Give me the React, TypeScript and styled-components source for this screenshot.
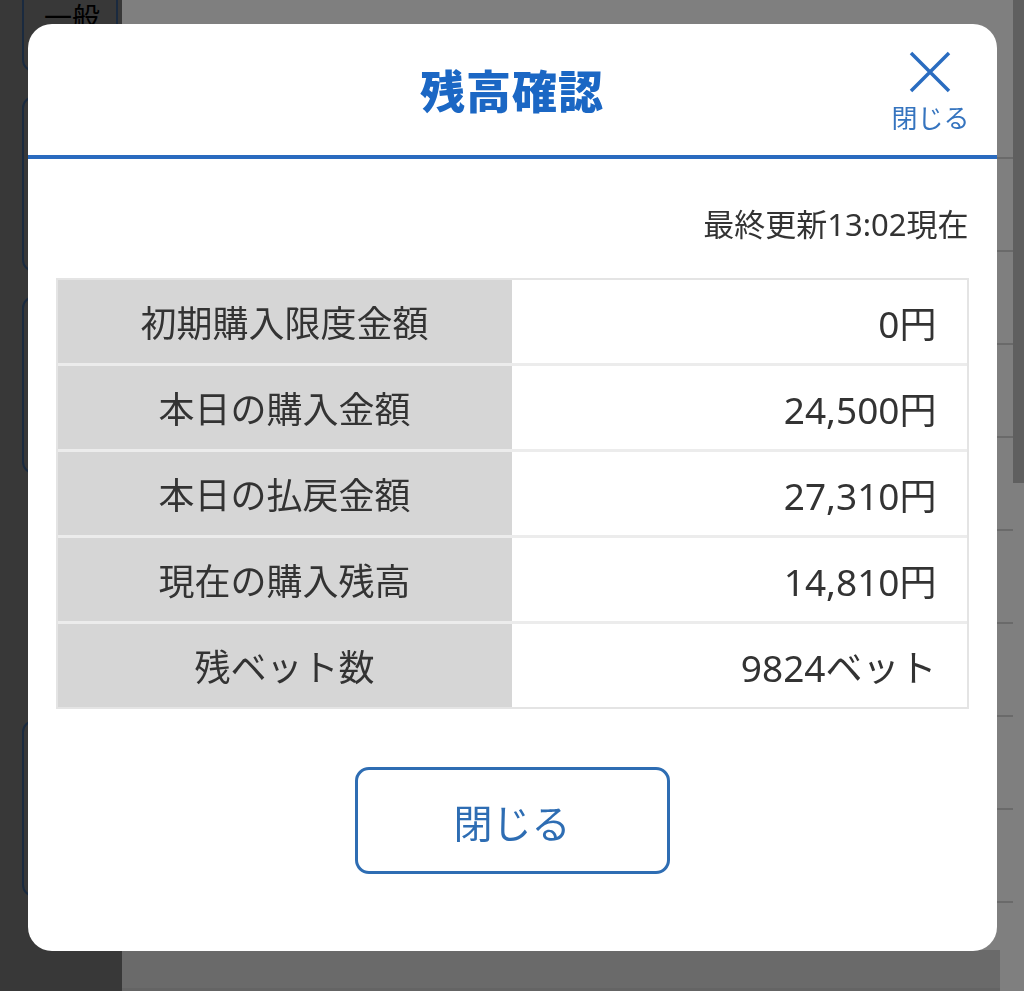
import styled, {createGlobalStyle} from "styled-components";

const GlobalStyle = createGlobalStyle`
  html, body {
    margin: 0;
    padding: 0;
    overflow: hidden;
  }
  body {
    font-family: "Noto Sans", "Noto Sans CJK JP", sans-serif;
    color: #333;
  }
`;

const Page = styled.div`
  display: flex;
  width: 1024px;
  height: 991px;
  background: #ffffff;
`;

const Sidebar = styled.div`
  width: 122px;
  flex-shrink: 0;
  background: #707070;
  display: flex;
  flex-direction: column;
  gap: 24px;
  padding-left: 22px;
  box-sizing: border-box;
  margin-top: -22px;
`;

const SideTab = styled.div<{ $h: number; $bordered?: boolean }>`
  height: ${(props) => props.$h}px;
  width: 96px;
  box-sizing: border-box;
  border: 2px solid ${(props) => (props.$bordered ? "#34557f" : "transparent")};
  border-radius: 12px;
  font-family: "Noto Sans CJK JP", sans-serif;
  font-size: 28px;
  color: #000;
  padding-left: 20px;
  line-height: 1;
  overflow: hidden;
`;

const TabText = styled.div`
  padding-top: 22px;
`;

const Main = styled.div`
  flex: 1;
  display: flex;
  flex-direction: column;
`;

const MainBody = styled.div`
  flex: 1;
  display: flex;
`;

const List = styled.div`
  flex: 1;
  padding-top: 66px;
`;

const ListRow = styled.div`
  height: 91px;
  border-bottom: 2px solid #d4d4d4;
`;

const ScrollTrack = styled.div`
  width: 11px;
`;

const ScrollThumb = styled.div`
  height: 483px;
  background: #bebebe;
`;

const Footer = styled.div`
  height: 41px;
  margin-right: 24px;
  background: #d4d4d4;
  border-bottom: 3px solid #c8c8c8;
  box-sizing: border-box;
`;

const Overlay = styled.div`
  position: fixed;
  inset: 0;
  background: rgba(0, 0, 0, 0.5);
  display: flex;
  justify-content: center;
  align-items: flex-start;
  padding-top: 24px;
  box-sizing: border-box;
`;

const Modal = styled.div`
  width: 969px;
  background: #fff;
  border-radius: 24px;
  overflow: hidden;
`;

const ModalHeader = styled.div`
  position: relative;
  height: 135px;
  border-bottom: 4px solid #2a6bbf;
  display: flex;
  justify-content: center;
  align-items: center;
  padding-top: 0;
  box-sizing: border-box;
`;

const Title = styled.h1`
  margin: 0;
  font-family: "Noto Sans CJK JP", sans-serif;
  font-weight: 900;
  font-size: 45px;
  color: #1b67c4;
  letter-spacing: 1px;
`;

const CloseIcon = styled.button`
  position: absolute;
  right: 27px;
  top: 26px;
  background: none;
  border: none;
  padding: 0;
  display: flex;
  flex-direction: column;
  align-items: center;
  gap: 10px;
  cursor: pointer;
  color: #3574bf;
  font-family: "Noto Sans CJK JP", sans-serif;
  font-size: 26px;
  line-height: 1;
`;

const Body = styled.div`
  padding: 50px 28px 77px;
  display: flex;
  flex-direction: column;
`;

const Updated = styled.div`
  align-self: flex-end;
  font-size: 31px;
  color: #333;
  line-height: 1;
  margin-bottom: 38px;
`;

const Table = styled.div`
  border: 2px solid #e4e4e4;
  background: #ececec;
  display: flex;
  flex-direction: column;
  gap: 3px;
`;

const Row = styled.div`
  display: grid;
  grid-template-columns: 454px 1fr;
  height: 83px;
`;

const Label = styled.div`
  background: #d6d6d6;
  display: flex;
  align-items: center;
  justify-content: center;
  font-size: 36px;
  color: #333;
`;

const Value = styled.div`
  background: #fff;
  display: flex;
  align-items: center;
  justify-content: flex-end;
  padding-right: 30px;
  font-size: 37px;
  color: #333;
`;

const Actions = styled.div`
  display: flex;
  justify-content: center;
  margin-top: 58px;
`;

const CloseButton = styled.button`
  width: 315px;
  height: 107px;
  border: 3px solid #2e6db3;
  border-radius: 14px;
  background: #fff;
  color: #2e6db3;
  font-family: "Noto Sans CJK JP", sans-serif;
  font-size: 39px;
  cursor: pointer;
`;

const rows = [
  {label: "初期購入限度金額", value: "0円"},
  {label: "本日の購入金額", value: "24,500円"},
  {label: "本日の払戻金額", value: "27,310円"},
  {label: "現在の購入残高", value: "14,810円"},
  {label: "残ベット数", value: "9824ベット"},
];

function App() {
  return (
    <>
      <GlobalStyle/>
      <Page>
        <Sidebar>
          <SideTab $h={94} $bordered><TabText>一般</TabText></SideTab>
          <SideTab $h={176} $bordered/>
          <SideTab $h={178} $bordered/>
          <SideTab $h={198}/>
          <SideTab $h={177} $bordered/>
        </Sidebar>
        <Main>
          <MainBody>
            <List>
              {Array.from({length: 9}).map((_, i) => (
                <ListRow key={i}/>
              ))}
            </List>
            <ScrollTrack>
              <ScrollThumb/>
            </ScrollTrack>
          </MainBody>
          <Footer/>
        </Main>
      </Page>
      <Overlay>
        <Modal>
          <ModalHeader>
            <Title>残高確認</Title>
            <CloseIcon>
              <svg width="44" height="44" viewBox="0 0 44 44">
                <path d="M3 3 L41 41 M41 3 L3 41" stroke="#2a6cc0" strokeWidth="3.5" fill="none"/>
              </svg>
              閉じる
            </CloseIcon>
          </ModalHeader>
          <Body>
            <Updated>最終更新13:02現在</Updated>
            <Table>
              {rows.map((row) => (
                <Row key={row.label}>
                  <Label>{row.label}</Label>
                  <Value>{row.value}</Value>
                </Row>
              ))}
            </Table>
            <Actions>
              <CloseButton>閉じる</CloseButton>
            </Actions>
          </Body>
        </Modal>
      </Overlay>
    </>
  );
}

export default App;
